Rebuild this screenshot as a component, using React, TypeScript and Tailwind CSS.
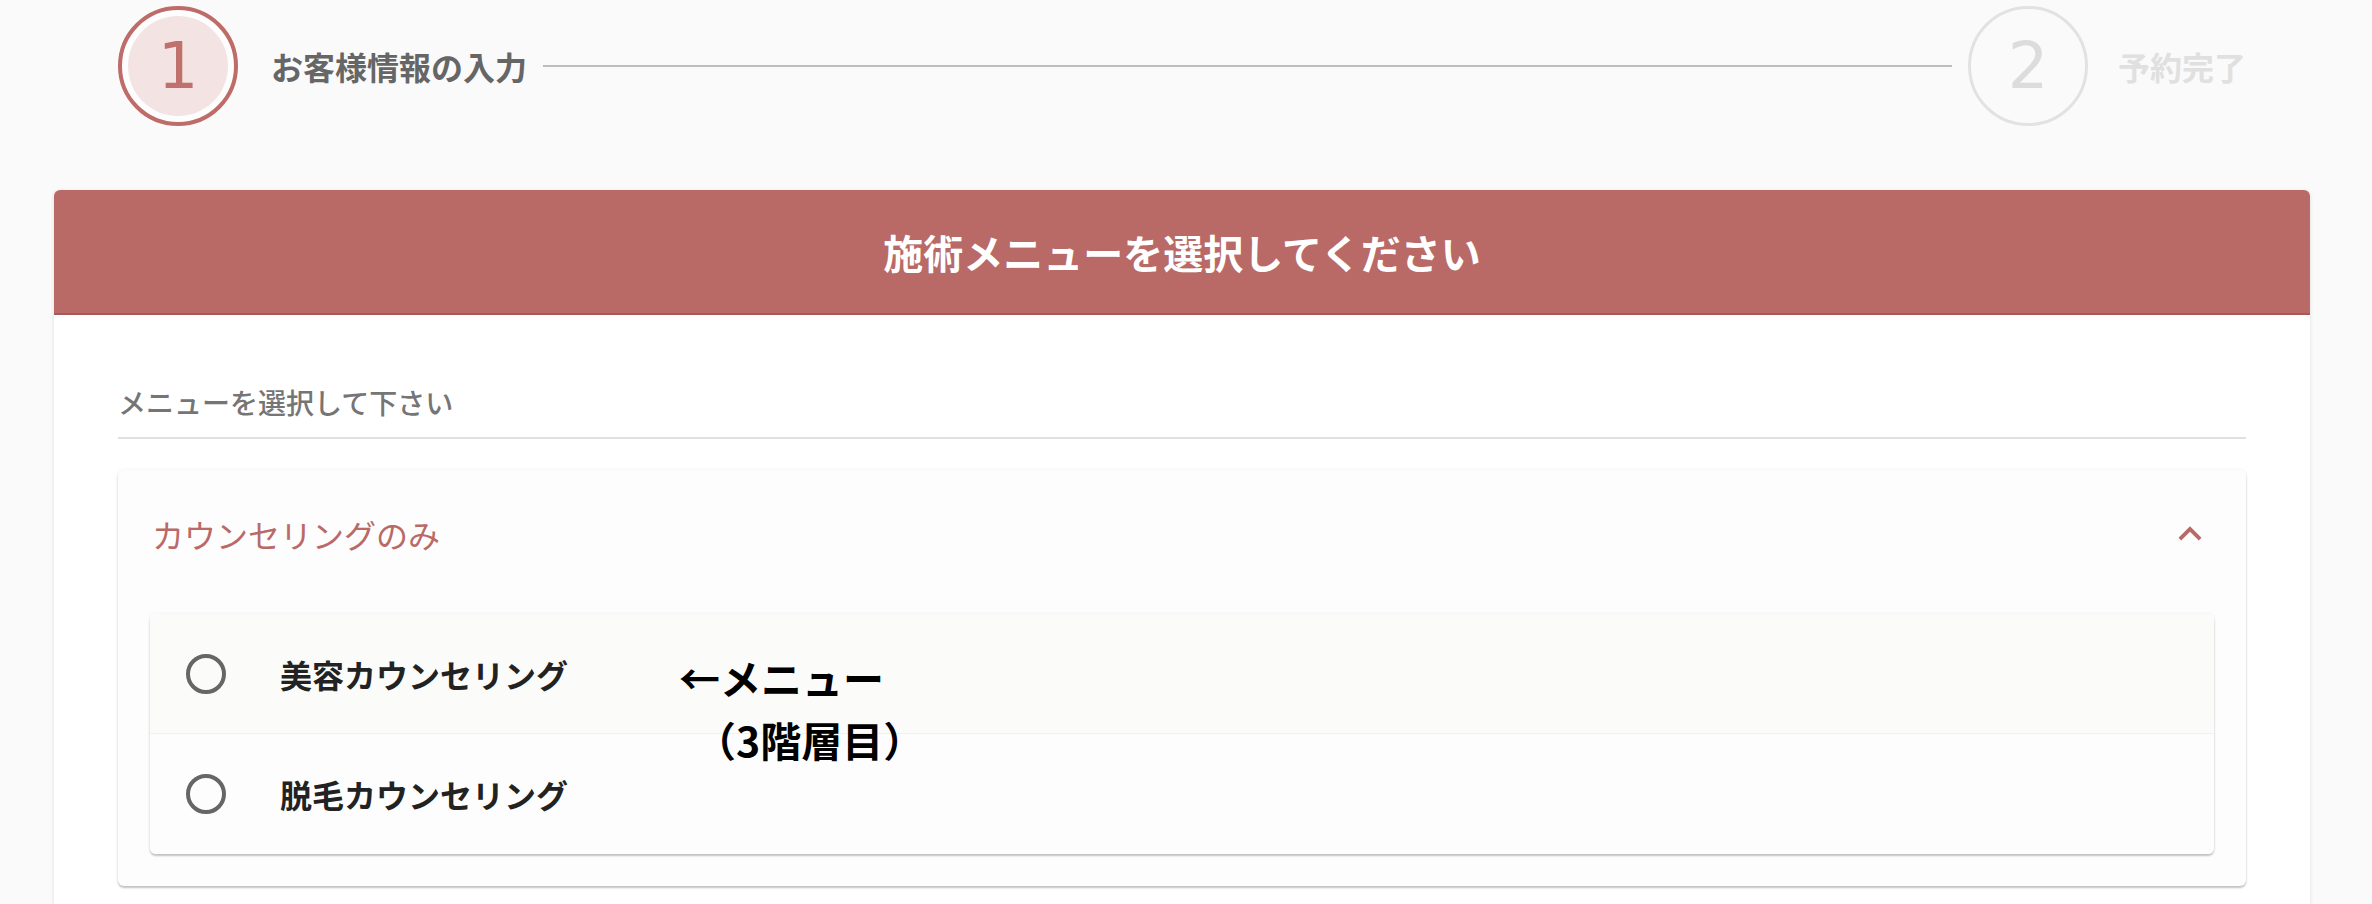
import React from 'react'

const items = ['美容カウンセリング', '脱毛カウンセリング']

function StepCircle({ n, active }: { n: number; active: boolean }) {
  if (active) {
    return (
      <div className="w-[120px] h-[120px] shrink-0 rounded-full border-4 border-[#bd6c68] bg-[#fdfdfd] p-[6px]">
        <div className="w-full h-full rounded-full bg-[#f3e4e3] flex items-center justify-center">
          <span className="font-['DejaVu_Sans',sans-serif] text-[64px] leading-none text-[#c0716d]">{n}</span>
        </div>
      </div>
    )
  }
  return (
    <div className="w-[120px] h-[120px] shrink-0 rounded-full border-[3px] border-[#e2e2e2] flex items-center justify-center">
      <span className="font-['DejaVu_Sans',sans-serif] text-[64px] leading-none text-[#dcdcdc]">{n}</span>
    </div>
  )
}

export default function App() {
  return (
    <div className="min-h-screen bg-[#fafafa] font-['Noto_Sans_CJK_JP',sans-serif]">
      {/* stepper */}
      <div className="pt-[6px] pl-[118px] pr-[126px] flex items-center">
        <StepCircle n={1} active />
        <span className="ml-[33px] text-[32px] font-bold text-[#666666] whitespace-nowrap">お客様情報の入力</span>
        <div className="flex-1 h-[2px] bg-[#bdbdbd] ml-[16px] mr-[16px]" />
        <StepCircle n={2} active={false} />
        <span className="ml-[30px] text-[32px] font-bold text-[#e0e0e0] whitespace-nowrap">予約完了</span>
      </div>

      {/* card */}
      <div className="mt-[64px] ml-[54px] mr-[62px] rounded-t-[6px] overflow-hidden bg-white shadow-[0_1px_4px_rgba(0,0,0,0.12)]">
        <div className="h-[125px] flex items-center justify-center bg-[#b96a66] border-b-2 border-[#a45b57]">
          <h2 className="text-[40px] font-bold text-white">施術メニューを選択してください</h2>
        </div>

        <div className="px-[64px] pt-[67px] pb-[48px]">
          <div className="pb-[15px] border-b-2 border-[#e0e0e0]">
            <span className="text-[28px] leading-[40px] font-medium text-[#757575]">メニューを選択して下さい</span>
          </div>

          <div className="mt-[31px] rounded-[6px] bg-[#fdfdfd] shadow-[0_2px_2px_rgba(0,0,0,0.22),0_0_4px_rgba(0,0,0,0.06)]">
            <div className="h-[128px] flex items-center justify-between pl-[34px] pr-[33px]">
              <span className="text-[32px] text-[#b96a66]">カウンセリングのみ</span>
              <svg width="46" height="46" viewBox="0 0 24 24" fill="#b96a66">
                <path d="M12 8l-6 6 1.41 1.41L12 10.83l4.59 4.58L18 14z" />
              </svg>
            </div>

            <div className="px-[32px] pt-[16px] pb-[32px]">
              <div className="relative rounded-[6px] overflow-hidden shadow-[0_2px_2px_rgba(0,0,0,0.22),0_0_4px_rgba(0,0,0,0.06)]">
                {items.map((label, i) => (
                  <div
                    key={label}
                    className={`h-[120px] flex items-center pl-[36px] ${i === 0 ? 'bg-[#fbfbf9] border-b border-[#f1f1ef]' : 'bg-[#fdfdfd]'}`}
                  >
                    <div className="w-[40px] h-[40px] rounded-full border-4 border-[#666666]" />
                    <span className="ml-[54px] text-[32px] font-semibold text-[#222222]">{label}</span>
                  </div>
                ))}

                {/* annotation */}
                <div className="absolute left-[529px] top-[32px] text-[41px] leading-[62px] font-bold text-black whitespace-nowrap">
                  <div>←メニュー</div>
                  <div className="ml-[16px]">（3階層目）</div>
                </div>
              </div>
            </div>
          </div>
        </div>
      </div>
    </div>
  )
}
